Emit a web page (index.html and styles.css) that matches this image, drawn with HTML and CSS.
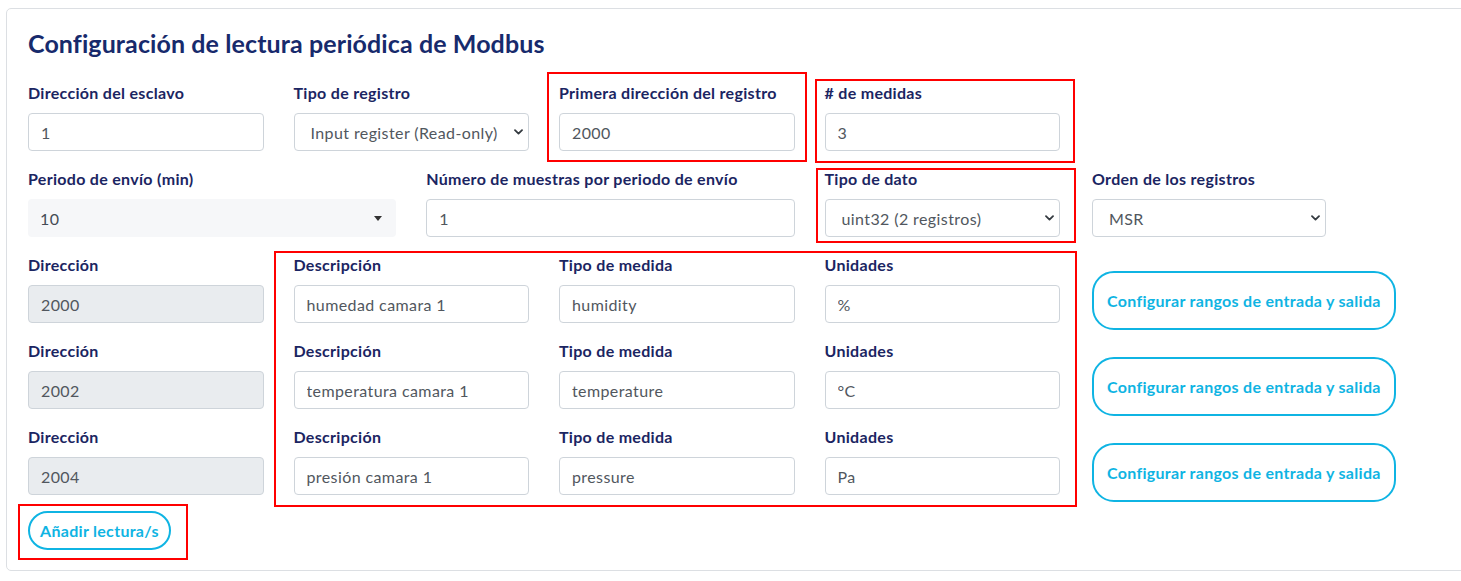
FILE: index.html
```html
<!DOCTYPE html>
<html lang="es">
<head>
<meta charset="utf-8">
<title>Configuración de lectura periódica de Modbus</title>
<link rel="stylesheet" href="styles.css">
</head>
<body>
<div class="card">
  <h2 class="title">Configuración de lectura periódica de Modbus</h2>
  <div class="grid">
    <div class="fg c2">
      <label>Dirección del esclavo</label>
      <input class="control" type="text" value="1">
    </div>
    <div class="fg c2">
      <label>Tipo de registro</label>
      <div class="sel">
        <select class="control select"><option>Input register (Read-only)</option></select>
        <svg class="chev" width="9" height="6" viewBox="0 0 9 6"><path d="M1 1.2 L4.5 4.6 L8 1.2" fill="none" stroke="#343a40" stroke-width="1.8" stroke-linecap="round" stroke-linejoin="round"/></svg>
      </div>
    </div>
    <div class="fg c2 mark mark-a">
      <label>Primera dirección del registro</label>
      <input class="control" type="text" value="2000">
    </div>
    <div class="fg c2 mark mark-b">
      <label># de medidas</label>
      <input class="control" type="text" value="3">
    </div>

    <div class="fg c3-first">
      <label>Periodo de envío (min)</label>
      <div class="fake-select"><span>10</span><span class="caret"></span></div>
    </div>
    <div class="fg c3">
      <label>Número de muestras por periodo de envío</label>
      <input class="control" type="text" value="1">
    </div>
    <div class="fg c2 mark mark-c">
      <label>Tipo de dato</label>
      <div class="sel">
        <select class="control select"><option>uint32 (2 registros)</option></select>
        <svg class="chev" width="9" height="6" viewBox="0 0 9 6"><path d="M1 1.2 L4.5 4.6 L8 1.2" fill="none" stroke="#343a40" stroke-width="1.8" stroke-linecap="round" stroke-linejoin="round"/></svg>
      </div>
    </div>
    <div class="fg c2 shift">
      <label>Orden de los registros</label>
      <div class="sel">
        <select class="control select"><option>MSR</option></select>
        <svg class="chev" width="9" height="6" viewBox="0 0 9 6"><path d="M1 1.2 L4.5 4.6 L8 1.2" fill="none" stroke="#343a40" stroke-width="1.8" stroke-linecap="round" stroke-linejoin="round"/></svg>
      </div>
    </div>

    <div class="stack c2-first">
      <div class="fg"><label>Dirección</label><input class="control" type="text" value="2000" disabled></div>
      <div class="fg"><label>Dirección</label><input class="control" type="text" value="2002" disabled></div>
      <div class="fg"><label>Dirección</label><input class="control" type="text" value="2004" disabled></div>
    </div>
    <div class="meas mark mark-d">
      <div class="fg"><label>Descripción</label><input class="control" type="text" value="humedad camara 1"></div>
      <div class="fg"><label>Tipo de medida</label><input class="control" type="text" value="humidity"></div>
      <div class="fg"><label>Unidades</label><input class="control" type="text" value="%"></div>
      <div class="fg"><label>Descripción</label><input class="control" type="text" value="temperatura camara 1"></div>
      <div class="fg"><label>Tipo de medida</label><input class="control" type="text" value="temperature"></div>
      <div class="fg"><label>Unidades</label><input class="control" type="text" value="°C"></div>
      <div class="fg"><label>Descripción</label><input class="control" type="text" value="presión camara 1"></div>
      <div class="fg"><label>Tipo de medida</label><input class="control" type="text" value="pressure"></div>
      <div class="fg"><label>Unidades</label><input class="control" type="text" value="Pa"></div>
    </div>
    <div class="stack c2 shift">
      <div class="btn-cell"><button class="btn btn-range">Configurar rangos de entrada y salida</button></div>
      <div class="btn-cell"><button class="btn btn-range">Configurar rangos de entrada y salida</button></div>
      <div class="btn-cell"><button class="btn btn-range">Configurar rangos de entrada y salida</button></div>
    </div>
  </div>
  <div class="actions">
    <button class="btn btn-add mark mark-e">Añadir lectura/s</button>
  </div>
</div>
</body>
</html>
```

FILE: styles.css
```css
html, body {
  margin: 0;
  padding: 0;
  overflow: hidden;
  background: #ffffff;
}

body {
  font-family: Lato, "Noto Sans", sans-serif;
  color: #1a2667;
}

.card {
  width: 1605px;
  margin: 8px 0 0 6px;
  border: 1px solid #dcdfe3;
  border-radius: 5px;
  padding: 20px 21px 20px 21px;
  background: #fff;
}

.title {
  margin: 0 0 24px 0;
  font-size: 25px;
  line-height: 28px;
  font-weight: 700;
  color: #172a6c;
  letter-spacing: 0.1px;
}

.grid {
  display: grid;
  grid-template-columns: repeat(12, 102.75px);
  column-gap: 30px;
  align-items: start;
}

.c2 { grid-column: span 2; }
.c3 { grid-column: span 3; }
.c2-first { grid-column: 1 / span 2; }
.c3-first { grid-column: 1 / span 3; }
.shift { margin-left: 2px; }

.fg {
  display: flex;
  flex-direction: column;
  margin-bottom: 16px;
}

label {
  display: block;
  font-size: 16px;
  line-height: 24px;
  font-weight: 700;
  color: #1b2562;
  margin-bottom: 8px;
  white-space: nowrap;
  letter-spacing: 0.3px;
}

.control {
  box-sizing: border-box;
  height: 38px;
  width: 100%;
  padding: 6px 12px;
  font-family: Lato, "Noto Sans", sans-serif;
  font-size: 16px;
  letter-spacing: 0.4px;
  color: #51575e;
  background: #fff;
  border: 1px solid #ced4da;
  border-radius: 4px;
  outline: none;
}

.control:disabled {
  background: #e9ecef;
  color: #51575e;
}

.sel {
  position: relative;
}

.select {
  appearance: none;
  -webkit-appearance: none;
  padding-left: 16px;
  padding-right: 28px;
}

.chev {
  position: absolute;
  right: 6px;
  top: 16px;
  pointer-events: none;
}

.fake-select {
  box-sizing: border-box;
  height: 38px;
  display: flex;
  align-items: center;
  justify-content: space-between;
  padding: 0 14px 0 12px;
  background: #f6f7f9;
  border-radius: 4px;
  font-size: 16px;
  letter-spacing: 0.4px;
  color: #444b55;
}

.caret {
  width: 0;
  height: 0;
  border-left: 4px solid transparent;
  border-right: 4px solid transparent;
  border-top: 5px solid #333;
}

.meas {
  grid-column: 3 / span 6;
  display: grid;
  grid-template-columns: repeat(3, 235.5px);
  column-gap: 30px;
  align-self: start;
}

.btn-cell {
  height: 86px;
  box-sizing: border-box;
  padding-top: 18px;
}

.btn {
  font-family: Lato, "Noto Sans", sans-serif;
  font-weight: 700;
  color: #0fb4e3;
  background: #fff;
  border: 2px solid #0fb4e3;
  cursor: pointer;
  white-space: nowrap;
  letter-spacing: 0.3px;
  margin: 0;
}

.btn-range {
  height: 59px;
  padding: 0 13px;
  font-size: 16px;
  border-radius: 22px;
}

.actions {
  display: flex;
}

.btn-add {
  height: 39px;
  padding: 0 10px;
  font-size: 16px;
  border-radius: 20px;
}

/* red annotation frames */
.mark { position: relative; }
.mark::after {
  content: "";
  position: absolute;
  border: 2px solid #ff0000;
  pointer-events: none;
}
.mark-a::after { top: -9px; bottom: -11px; left: -12px; right: -12px; }
.mark-b::after { top: -2px; bottom: -12px; left: -10px; right: -15px; }
.mark-c::after { top: 1px; bottom: -6px; left: -9px; right: -16px; }
.mark-d::after { top: -2px; bottom: 4px; left: -20px; right: -17px; }
.mark-e::after { top: -9px; bottom: -12px; left: -12px; right: -19px; }
```
